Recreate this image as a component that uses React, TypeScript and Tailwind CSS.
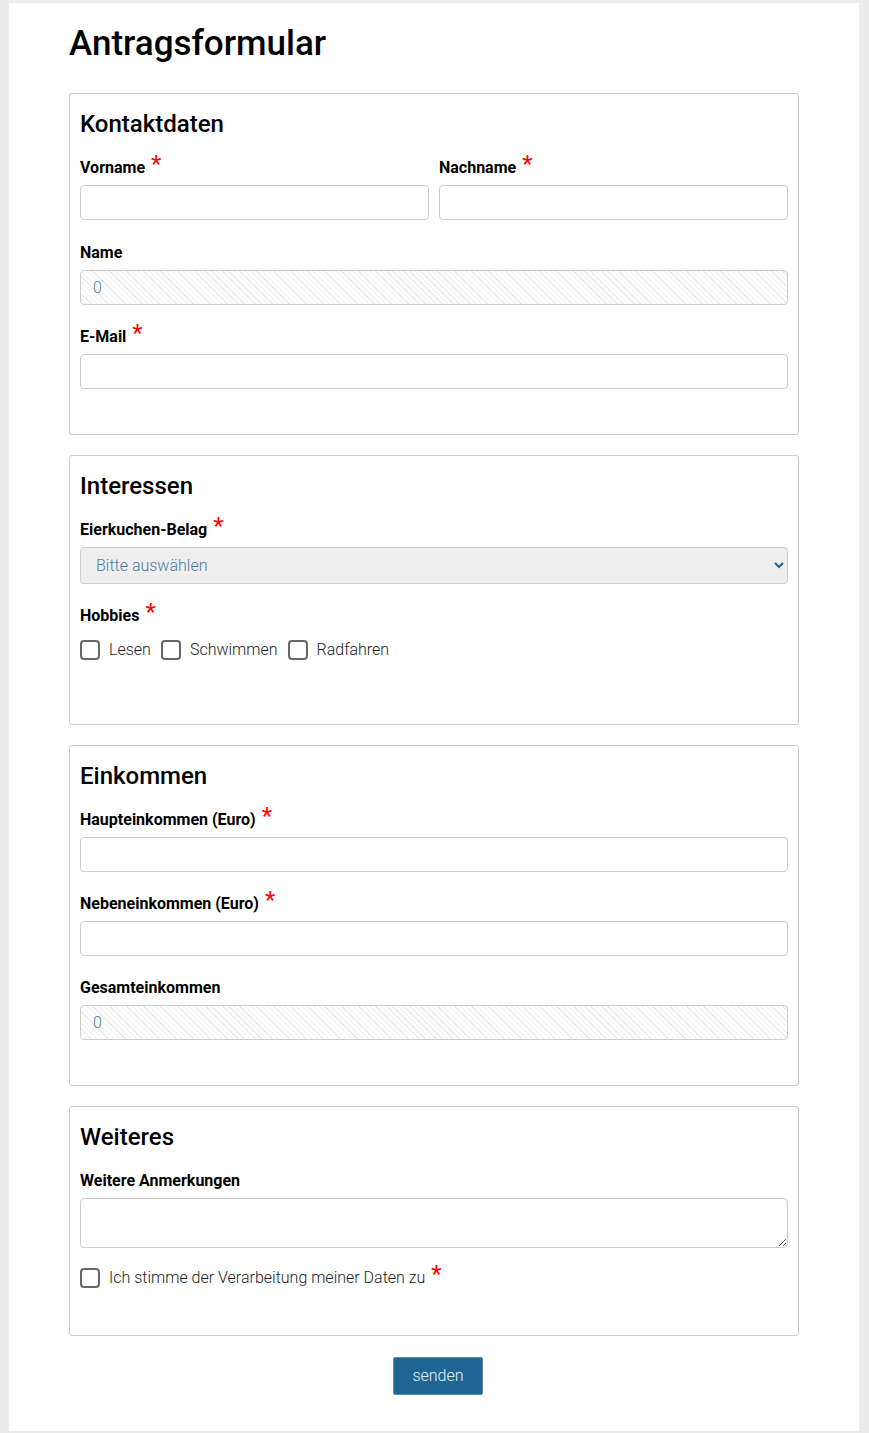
import React, { useState } from 'react';

const inputCls =
    'block w-full h-[35px] px-3 border border-[#cccccc] rounded-[4px] bg-white text-[16px] font-light text-[#333] focus:outline-none';
const readonlyCls =
    'block w-full h-[35px] px-3 border border-[#cccccc] rounded-[4px] text-[16px] font-light text-[#4a7ba6] bg-[image:repeating-linear-gradient(45deg,#ffffff_0px,#ffffff_3px,#ececec_3px,#ececec_4px)]';

function Star() {
    return <span className="relative top-[-1px] ml-[6px] text-[24px] leading-[0] font-normal text-[#ff0000]">*</span>;
}

function Label({ children, required }: { children: React.ReactNode; required?: boolean }) {
    return (
        <label className="block h-6 leading-6 text-[16px] font-bold text-black mb-[5px] whitespace-nowrap">
            {children}
            {required && <Star />}
        </label>
    );
}

function Checkbox({ label, checked, onChange }: { label: React.ReactNode; checked: boolean; onChange: () => void }) {
    return (
        <label className="flex items-center gap-[9px] cursor-pointer">
            <input
                type="checkbox"
                checked={checked}
                onChange={onChange}
                className="appearance-none shrink-0 w-5 h-5 border-2 border-[#666666] rounded-[4px] bg-white checked:bg-[#1f6593] checked:border-[#1f6593]"
            />
            <span className="text-[16px] leading-5 font-light text-[#222]">{label}</span>
        </label>
    );
}

function Section({ title, children }: { title: string; children: React.ReactNode }) {
    return (
        <div className="border border-[#cccccc] rounded-[3px] px-[10px] pt-[16px] pb-[25px] mb-[20px]">
            <h2 className="text-[24px] leading-[29px] font-medium text-black mb-[17px]">{title}</h2>
            {children}
        </div>
    );
}

export default function App() {
    const [vorname, setVorname] = useState('');
    const [nachname, setNachname] = useState('');
    const [haupt, setHaupt] = useState('');
    const [neben, setNeben] = useState('');
    const [hobbies, setHobbies] = useState<string[]>([]);
    const [zustimmung, setZustimmung] = useState(false);

    const name = [vorname, nachname].filter(Boolean).join(' ') || '0';
    const gesamt = (parseFloat(haupt) || 0) + (parseFloat(neben) || 0);

    const toggleHobby = (h: string) =>
        setHobbies((prev) => (prev.includes(h) ? prev.filter((x) => x !== h) : [...prev, h]));

    return (
        <div className="min-h-screen bg-[#ececec] pt-[3px] font-['Roboto',sans-serif]">
            <div className="ml-[9px] w-[850px] bg-white px-[60px] pt-[19px] pb-[36px]">
                <h1 className="text-[35px] leading-[43px] font-medium text-black mb-[28px]">Antragsformular</h1>

                <form onSubmit={(e) => e.preventDefault()}>
                    <Section title="Kontaktdaten">
                        <div className="grid grid-cols-2 gap-[10px] mb-[21px]">
                            <div>
                                <Label required>Vorname</Label>
                                <input className={inputCls} value={vorname} onChange={(e) => setVorname(e.target.value)} />
                            </div>
                            <div>
                                <Label required>Nachname</Label>
                                <input className={inputCls} value={nachname} onChange={(e) => setNachname(e.target.value)} />
                            </div>
                        </div>
                        <div className="mb-[20px]">
                            <Label>Name</Label>
                            <input className={readonlyCls} value={name} readOnly />
                        </div>
                        <div className="mb-[20px]">
                            <Label required>E-Mail</Label>
                            <input type="email" className={inputCls} />
                        </div>
                    </Section>

                    <Section title="Interessen">
                        <div className="mb-[20px]">
                            <Label required>Eierkuchen-Belag</Label>
                            <div className="relative">
                                <select className="block w-full h-[37px] pl-[15px] pr-8 appearance-none border border-[#cccccc] rounded-[4px] bg-[#eeeeee] text-[16px] font-light text-[#4a7ba6] focus:outline-none">
                                    <option>Bitte auswählen</option>
                                    <option>Zucker</option>
                                    <option>Apfelmus</option>
                                    <option>Marmelade</option>
                                </select>
                                <svg
                                    className="absolute right-[3px] top-[13px] pointer-events-none"
                                    width="12"
                                    height="10"
                                    viewBox="0 0 12 10"
                                    fill="none"
                                >
                                    <path d="M2 3 L6 7 L10 3" stroke="#1f6593" strokeWidth="2.2" />
                                </svg>
                            </div>
                        </div>
                        <div className="mb-[39px]">
                            <Label required>Hobbies</Label>
                            <div className="flex items-center gap-[10px] mt-[12px]">
                                {['Lesen', 'Schwimmen', 'Radfahren'].map((h) => (
                                    <Checkbox key={h} label={h} checked={hobbies.includes(h)} onChange={() => toggleHobby(h)} />
                                ))}
                            </div>
                        </div>
                    </Section>

                    <Section title="Einkommen">
                        <div className="mb-[20px]">
                            <Label required>Haupteinkommen (Euro)</Label>
                            <input className={inputCls} value={haupt} onChange={(e) => setHaupt(e.target.value)} />
                        </div>
                        <div className="mb-[20px]">
                            <Label required>Nebeneinkommen (Euro)</Label>
                            <input className={inputCls} value={neben} onChange={(e) => setNeben(e.target.value)} />
                        </div>
                        <div className="mb-[20px]">
                            <Label>Gesamteinkommen</Label>
                            <input className={readonlyCls} value={String(gesamt)} readOnly />
                        </div>
                    </Section>

                    <Section title="Weiteres">
                        <div className="mb-[20px]">
                            <Label>Weitere Anmerkungen</Label>
                            <textarea className="block w-full h-[50px] px-3 py-1 border border-[#cccccc] rounded-[4px] text-[16px] font-light focus:outline-none" />
                        </div>
                        <div className="mb-[22px]">
                            <Checkbox
                                label={
                                    <>
                                        Ich stimme der Verarbeitung meiner Daten zu
                                        <Star />
                                    </>
                                }
                                checked={zustimmung}
                                onChange={() => setZustimmung(!zustimmung)}
                            />
                        </div>
                    </Section>

                    <div className="flex justify-center pl-2 pt-px">
                        <button
                            type="submit"
                            className="w-[90px] h-[38px] bg-[#1f6593] border border-[#5b8db0] rounded-[2px] text-[16px] font-light text-[#e8f1f8]"
                        >
                            senden
                        </button>
                    </div>
                </form>
            </div>
        </div>
    );
}
